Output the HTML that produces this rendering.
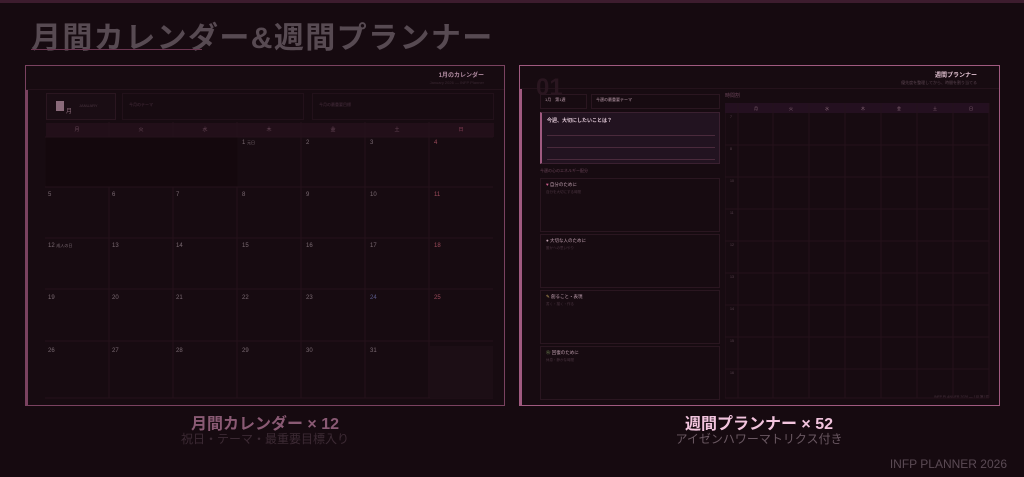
<!DOCTYPE html>
<html><head><meta charset="utf-8"><style>
*{margin:0;padding:0;box-sizing:border-box}
body{width:1024px;height:477px;background:#160a10;position:relative;overflow:hidden;font-family:"Liberation Sans","Noto Sans CJK JP",sans-serif}
.a{position:absolute}
.t{white-space:nowrap}
</style></head><body>
<div class="a" style="left:0;top:0;width:1024px;height:3px;background:#3d1c2e"></div>
<div class="a t" style="left:31px;top:13px;font-size:30px;font-weight:bold;color:#574a52;letter-spacing:1.4px">月間カレンダー&amp;週間プランナー</div>
<div class="a" style="left:31px;top:49px;width:171px;height:1px;background:#6a3550"></div>

<!-- left panel -->
<div class="a" style="left:25px;top:65px;width:480px;height:341px;border:1px solid #7a4260;background:#170b11">
 <div class="a" style="left:0;top:24px;width:2px;height:315px;background:#7a4260"></div>
 <div class="a" style="left:0;top:23px;width:478px;height:1px;background:#24121b"></div>
 <div class="a t" style="right:20px;top:4px;font-size:6px;color:#b08aa0;font-weight:bold">1月のカレンダー</div>
 <div class="a t" style="right:20px;top:14px;font-size:4px;color:#3a2832">January 2026 — INFP Planner</div>
 <div class="a" style="left:20px;top:27px;width:70px;height:27px;border:1px solid #2a1620;background:#1a0d14"></div>
 <div class="a" style="left:30px;top:35px;width:8px;height:10px;background:#8a6a7a"></div>
 <div class="a t" style="left:40px;top:40px;font-size:6px;color:#8a6a7a">月</div>
 <div class="a t" style="left:53px;top:37px;font-size:4px;color:#4a3540">JANUARY</div>
 <div class="a" style="left:96px;top:27px;width:182px;height:27px;border:1px solid #22111a"></div>
 <div class="a t" style="left:103px;top:36px;font-size:4px;color:#4a3040">今月のテーマ</div>
 <div class="a" style="left:286px;top:27px;width:182px;height:27px;border:1px solid #22111a"></div>
 <div class="a t" style="left:293px;top:36px;font-size:4px;color:#4a3040">今月の最重要目標</div>
 <div class="a" style="left:20px;top:57px;width:448px;height:14px;background:#220f19"></div>
</div>
<svg class="a" style="left:45px;top:122px" width="450" height="280">
 <g stroke="#24121b" stroke-width="1" fill="none">
  <path d="M0 15H448M0 65H448M0 116H448M0 167H448M0 219H448M0 276H448"/>
  <path d="M64 0V276M128 0V276M192 0V276M256 0V276M320 0V276M384 0V276"/>
 </g>
 <rect x="0.5" y="15.5" width="192" height="49" fill="#14080d"/>
 <rect x="385" y="224" width="63" height="52" fill="#1c0e15"/>
 <g font-size="5" fill="#6a4a5a" text-anchor="middle"><text x="32" y="9">月</text><text x="96" y="9">火</text><text x="160" y="9">水</text><text x="224" y="9">木</text><text x="288" y="9">金</text><text x="352" y="9">土</text><text x="416" y="9" fill="#8a4058">日</text></g>
 <g font-size="6" fill="#7a6a72">
  <text x="197" y="22">1 <tspan font-size="4">元日</tspan></text><text x="261" y="22">2</text><text x="325" y="22">3</text><text x="389" y="22" fill="#9a4a5a">4</text>
  <text x="3" y="74">5</text><text x="67" y="74">6</text><text x="131" y="74">7</text><text x="197" y="74">8</text><text x="261" y="74">9</text><text x="325" y="74">10</text><text x="389" y="74" fill="#9a4a5a">11</text>
  <text x="3" y="125">12 <tspan font-size="4">成人の日</tspan></text><text x="67" y="125">13</text><text x="131" y="125">14</text><text x="197" y="125">15</text><text x="261" y="125">16</text><text x="325" y="125">17</text><text x="389" y="125" fill="#9a4a5a">18</text>
  <text x="3" y="177">19</text><text x="67" y="177">20</text><text x="131" y="177">21</text><text x="197" y="177">22</text><text x="261" y="177">23</text><text x="325" y="177" fill="#5a5a8a">24</text><text x="389" y="177" fill="#9a4a5a">25</text>
  <text x="3" y="230">26</text><text x="67" y="230">27</text><text x="131" y="230">28</text><text x="197" y="230">29</text><text x="261" y="230">30</text><text x="325" y="230">31</text>
 </g>
</svg>

<!-- right panel -->
<div class="a" style="left:519px;top:65px;width:481px;height:341px;border:1px solid #a05a80;background:#170b11">
 <div class="a" style="left:0;top:22px;width:2px;height:317px;background:#a05a80"></div>
 <div class="a" style="left:0;top:22px;width:479px;height:1px;background:#24121b"></div>
 <div class="a t" style="left:16px;top:10px;font-size:24px;font-weight:bold;color:#2a1620;line-height:24px">01</div>
 <div class="a t" style="right:22px;top:4px;font-size:6px;color:#e0c0d0;font-weight:bold">週間プランナー</div>
 <div class="a t" style="right:22px;top:14px;font-size:4px;color:#5a4450">優先度を整理してから、時間を割り当てる</div>
 <div class="a" style="left:20px;top:28px;width:47px;height:15px;border:1px solid #2a1620"></div>
 <div class="a t" style="left:25px;top:31px;font-size:4px;color:#c0a0b0">1月　第1週</div>
 <div class="a" style="left:71px;top:28px;width:129px;height:15px;border:1px solid #2a1620"></div>
 <div class="a t" style="left:76px;top:31px;font-size:4px;color:#c0a0b0">今週の最重要テーマ</div>
 <div class="a" style="left:20px;top:46px;width:180px;height:52px;background:#221320;border:1px solid #3a2030;border-left:2px solid #a05a80"></div>
 <div class="a t" style="left:27px;top:51px;font-size:5px;color:#e0c8d6;font-weight:bold">今週、大切にしたいことは？</div>
 <div class="a" style="left:27px;top:69px;width:168px;height:1px;background:#4a2a3c"></div>
 <div class="a" style="left:27px;top:81px;width:168px;height:1px;background:#4a2a3c"></div>
 <div class="a" style="left:27px;top:93px;width:168px;height:1px;background:#4a2a3c"></div>
 <div class="a t" style="left:20px;top:102px;font-size:4px;color:#6a4458">今週の心のエネルギー配分</div>
 <div class="a" style="left:20px;top:112px;width:180px;height:54px;border:1px solid #2a1620"></div>
 <div class="a t" style="left:26px;top:116px;font-size:4.5px;color:#c0a0b0"><span style="color:#d06090">♥</span> 自分のために</div>
 <div class="a t" style="left:26px;top:124px;font-size:3.5px;color:#4a3440">自分を大切にする時間</div>
 <div class="a" style="left:20px;top:168px;width:180px;height:54px;border:1px solid #2a1620"></div>
 <div class="a t" style="left:26px;top:172px;font-size:4.5px;color:#c0a0b0">● 大切な人のために</div>
 <div class="a t" style="left:26px;top:180px;font-size:3.5px;color:#4a3440">誰かへの思いやり</div>
 <div class="a" style="left:20px;top:224px;width:180px;height:54px;border:1px solid #2a1620"></div>
 <div class="a t" style="left:26px;top:228px;font-size:4.5px;color:#c0a0b0"><span style="color:#d0b060">✎</span> 創ること・表現</div>
 <div class="a t" style="left:26px;top:236px;font-size:3.5px;color:#4a3440">書く・描く・作る</div>
 <div class="a" style="left:20px;top:280px;width:180px;height:54px;border:1px solid #2a1620"></div>
 <div class="a t" style="left:26px;top:284px;font-size:4.5px;color:#c0a0b0"><span style="color:#80a060">❀</span> 回復のために</div>
 <div class="a t" style="left:26px;top:292px;font-size:3.5px;color:#4a3440">休息・静かな時間</div>
 <div class="a t" style="left:205px;top:26px;font-size:5px;color:#6a4458">時間割</div>
 <div class="a t" style="right:10px;top:329px;font-size:3.5px;color:#4a3440">INFP PLANNER 2026 — 1月 第1週</div>
</div>
<svg class="a" style="left:725px;top:103px" width="265" height="296">
 <rect x="0" y="0" width="264" height="10" fill="#241020"/>
 <g stroke="#24121b" fill="none">
  <path d="M13 0V295M48 0V295M84 0V295M120 0V295M156 0V295M192 0V295M228 0V295M264 0V295M0 10V295"/>
  <path d="M0 42H264M0 74H264M0 106H264M0 138H264M0 170H264M0 202H264M0 234H264M0 266H264M0 295H264"/>
 </g>
 <g font-size="4" fill="#8a6a7a" text-anchor="middle"><text x="31" y="7">月</text><text x="66" y="7">火</text><text x="102" y="7">水</text><text x="138" y="7">木</text><text x="174" y="7">金</text><text x="210" y="7">土</text><text x="246" y="7">日</text></g>
 <g font-size="3.5" fill="#5a4450"><text x="5" y="15">7</text><text x="5" y="47">8</text><text x="5" y="79">10</text><text x="5" y="111">11</text><text x="5" y="143">12</text><text x="5" y="175">13</text><text x="5" y="207">14</text><text x="5" y="239">15</text><text x="5" y="271">16</text></g>
</svg>

<div class="a t" style="left:0;width:530px;text-align:center;top:410px;font-size:16px;color:#8a5a74;font-weight:bold">月間カレンダー × 12</div>
<div class="a t" style="left:0;width:530px;text-align:center;top:430px;font-size:12px;color:#3c2a34">祝日・テーマ・最重要目標入り</div>
<div class="a t" style="left:500px;width:518px;text-align:center;top:410px;font-size:16px;color:#f2c4de;font-weight:bold">週間プランナー × 52</div>
<div class="a t" style="left:500px;width:518px;text-align:center;top:430px;font-size:12px;color:#6a5862">アイゼンハワーマトリクス付き</div>
<div class="a t" style="right:17px;top:457px;font-size:12px;color:#5a4a54">INFP PLANNER 2026</div>
</body></html>
